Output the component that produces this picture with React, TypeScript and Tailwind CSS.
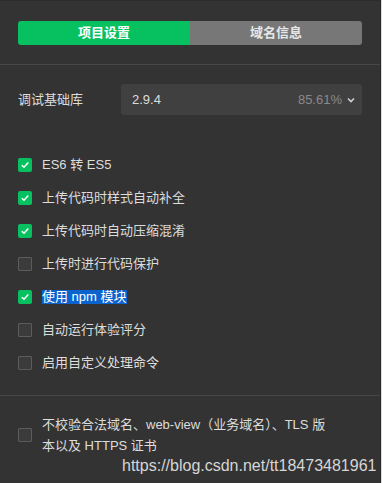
import React from "react";

const font = { fontFamily: '"Liberation Sans", "Noto Sans CJK SC", sans-serif' };

function Check({ on }: { on: boolean }) {
  if (on)
    return (
      <span className="w-[14px] h-[14px] rounded-[2px] bg-[#07c160] flex items-center justify-center shrink-0">
        <svg width="10" height="10" viewBox="0 0 10 10">
          <path d="M1.8 5.2 L4 7.3 L8.3 2.6" fill="none" stroke="#fff" strokeWidth="1.5" />
        </svg>
      </span>
    );
  return <span className="w-[14px] h-[14px] rounded-[1px] bg-[#3b3b3b] border border-[#5c5c5c] shrink-0" />;
}

const items: [string, boolean, boolean?][] = [
  ["ES6 转 ES5", true],
  ["上传代码时样式自动补全", true],
  ["上传代码时自动压缩混淆", true],
  ["上传时进行代码保护", false],
  ["使用 npm 模块", true, true],
  ["自动运行体验评分", false],
  ["启用自定义处理命令", false],
];

export default function App() {
  return (
    <div className="w-[382px] h-[483px] bg-[#333333] flex overflow-hidden text-[13px]" style={font}>
      <div className="flex-1 flex flex-col border-t border-[#2c2c2c] border-r border-r-[#2a2a2a]">
        <div className="px-[18px] pt-[20px] pb-[19px] border-b border-[#474747]">
          <div className="flex h-[24px] rounded-[3px] overflow-hidden">
            <div className="w-[172px] bg-[#07c160] text-white flex items-center justify-center font-bold">项目设置</div>
            <div className="flex-1 bg-[#777777] text-[#e6e6e6] flex items-center justify-center font-bold">域名信息</div>
          </div>
        </div>
        <div className="px-[18px] pt-[19px] flex items-center">
          <div className="w-[103px] text-[#dddddd]">调试基础库</div>
          <div className="w-[241px] h-[31px] bg-[#404040] rounded-[3px] flex items-center pl-[11px] pr-[7px]">
            <span className="text-[#dddddd]">2.9.4</span>
            <span className="ml-auto text-[#8a8a8a]">85.61%</span>
            <svg className="ml-[5px]" width="8" height="6" viewBox="0 0 8 6">
              <path d="M1 1.5 L4 4.5 L7 1.5" fill="none" stroke="#d0d0d0" strokeWidth="1.6" />
            </svg>
          </div>
        </div>
        <div className="px-[18px] pt-[33px] pb-[16px] border-b border-[#474747] flex flex-col">
          {items.map(([t, on, sel]) => (
            <div key={t} className="h-[33px] flex items-center gap-[10px]">
              <Check on={on} />
              <span
                className={sel ? "bg-[#0b63ce] text-white leading-[14px] h-[14px]" : "text-[#dddddd]"}
              >
                {t}
              </span>
            </div>
          ))}
        </div>
        <div className="px-[18px] pt-[18px] flex items-center gap-[10px]">
          <Check on={false} />
          <div className="text-[#dddddd] leading-[21px]">
            不校验合法域名、web-view（业务域名）、TLS 版
            <br />
            本以及 HTTPS 证书
          </div>
        </div>
        <div className="pl-[122px] mt-[1px] text-[16px] leading-[18px] text-[#d6d6d6]">
          https://blog.csdn.net/tt18473481961
        </div>
      </div>
      <div className="w-[3px] bg-[#d9d9d9]" />
    </div>
  );
}
